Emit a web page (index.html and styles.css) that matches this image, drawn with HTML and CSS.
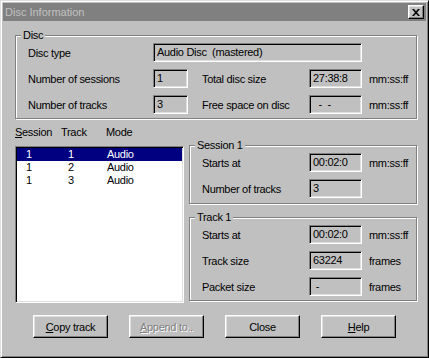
FILE: index.html
```html
<!DOCTYPE html>
<html lang="en">
<head>
  <meta charset="UTF-8" />
  <title>Disc Information</title>
  <link rel="stylesheet" href="styles.css">
</head>
<body>

  <div class="window">
    <div class="titlebar">
      <span class="title">Disc Information</span>
      <button class="close">
        <svg width="8" height="7" viewBox="0 0 8 7"><path d="M0 0h2l2 2.3L6 0h2L5 3.5 8 7H6L4 4.7 2 7H0l3-3.5z" fill="#000"/></svg>
      </button>
    </div>

    <div class="client">
      <div class="group disc">
        <div class="caption">Disc</div>
        <div class="disc-grid">
          <span class="lbl">Disc type</span>
          <span class="field wide">Audio Disc  (mastered)</span>

          <span class="lbl">Number of sessions</span>
          <span class="field small">1</span>
          <span class="lbl">Total disc size</span>
          <span class="field">27:38:8</span>
          <span class="unit">mm:ss:ff</span>

          <span class="lbl">Number of tracks</span>
          <span class="field small">3</span>
          <span class="lbl">Free space on disc</span>
          <span class="field">  -  -</span>
          <span class="unit">mm:ss:ff</span>
        </div>
      </div>

      <div class="middle">
        <div class="listcol">
          <div class="listhead">
            <span><u>S</u>ession</span>
            <span>Track</span>
            <span>Mode</span>
          </div>
          <div class="list">
            <div class="row sel"><span>1</span><span>1</span><span>Audio</span></div>
            <div class="row"><span>1</span><span>2</span><span>Audio</span></div>
            <div class="row"><span>1</span><span>3</span><span>Audio</span></div>
          </div>
        </div>

        <div class="sidecol">
          <div class="group session">
            <div class="caption">Session 1</div>
            <div class="side-grid">
              <span class="lbl">Starts at</span>
              <span class="field">00:02:0</span>
              <span class="unit">mm:ss:ff</span>

              <span class="lbl">Number of tracks</span>
              <span class="field">3</span>
              <span class="unit"></span>
            </div>
          </div>

          <div class="group track">
            <div class="caption">Track 1</div>
            <div class="side-grid">
              <span class="lbl">Starts at</span>
              <span class="field">00:02:0</span>
              <span class="unit">mm:ss:ff</span>

              <span class="lbl">Track size</span>
              <span class="field">63224</span>
              <span class="unit">frames</span>

              <span class="lbl">Packet size</span>
              <span class="field"> -</span>
              <span class="unit">frames</span>
            </div>
          </div>
        </div>
      </div>

      <div class="buttons">
        <button class="btn"><u>C</u>opy track</button>
        <button class="btn" disabled><u>A</u>ppend to..</button>
        <button class="btn">Close</button>
        <button class="btn"><u>H</u>elp</button>
      </div>
    </div>
  </div>

</body>
</html>
```

FILE: styles.css
```css
body{margin:0;font-family:"Liberation Sans",Arial,sans-serif;font-size:11px;color:#000;}

.window{width:429px;height:358px;box-sizing:border-box;background:#c0c0c0;border:1px solid;border-color:#dfdfdf #000 #000 #dfdfdf;box-shadow:inset 1px 1px #fff,inset -1px -1px #808080;padding:2px;}

.titlebar{height:18px;background:#808080;color:#c0c0c0;display:flex;align-items:center;justify-content:space-between;padding:0 2px;}
.title{font-size:11px;line-height:14px;}
.close{width:16px;height:14px;padding:0;margin:0;background:#c0c0c0;border:1px solid;border-color:#fff #000 #000 #fff;box-shadow:inset -1px -1px #808080,inset 1px 1px #dfdfdf;display:flex;align-items:center;justify-content:center;}

.client{padding:14px 9px 0 12px;letter-spacing:-0.3px;}

/* etched group box */
.group{border:1px solid #808080;box-shadow:1px 1px #fff,inset 1px 1px #fff;padding:0 0 4px 12px;}
.caption{margin:-8px 0 1px -7px;padding:0 2px;width:fit-content;background:#c0c0c0;line-height:14px;}

.disc-grid{display:grid;grid-template-columns:125px 49px 107px 60px 1fr;grid-auto-rows:19px;row-gap:7px;align-items:center;}
.side-grid{display:grid;grid-template-columns:107px 60px 1fr;grid-auto-rows:19px;row-gap:7px;align-items:center;}

.field{height:19px;box-sizing:border-box;width:53px;border:1px solid;border-color:#808080 #fff #fff #808080;box-shadow:inset 1px 1px #000,inset -1px -1px #dfdfdf;padding:0 3px;line-height:17px;white-space:pre;}
.field.small{width:35px;}
.field.wide{width:209px;grid-column:2 / 6;}

.middle{display:flex;margin-top:6px;}
.listcol{width:169px;}
.listhead{display:grid;grid-template-columns:46px 45px auto;line-height:14px;}
.list{margin-top:7px;height:157px;box-sizing:border-box;background:#fff;border:1px solid;border-color:#808080 #fff #fff #808080;box-shadow:inset 1px 1px #000,inset -1px -1px #dfdfdf;padding:1px;}
.row{display:grid;grid-template-columns:42px 39px auto;height:13px;line-height:13px;padding-left:9px;}
.row.sel{background:#000080;color:#fff;}

.sidecol{width:228px;margin-left:5px;}
.session{margin-top:20px;padding-bottom:5px;}
.track{margin-top:13px;}

.buttons{display:flex;gap:21px;margin-top:12px;padding-left:18px;}
.btn{width:75px;height:23px;padding:0;background:#c0c0c0;font:inherit;letter-spacing:-0.3px;color:#000;border:1px solid;border-color:#fff #000 #000 #fff;box-shadow:inset -1px -1px #808080,inset 1px 1px #dfdfdf;}
.btn:disabled{color:#808080;text-shadow:1px 1px #fff;}
```
